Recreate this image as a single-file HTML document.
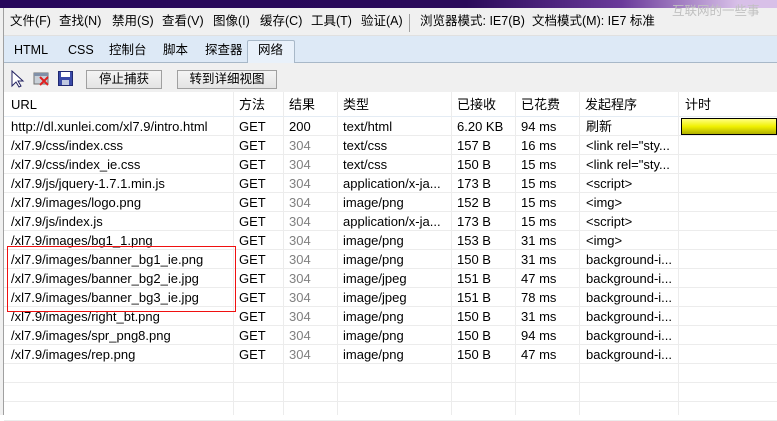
<!DOCTYPE html>
<html><head><meta charset="utf-8"><style>
*{margin:0;padding:0;box-sizing:border-box}
body{width:777px;height:415px;overflow:hidden;background:#fff;font-family:"Liberation Sans","Noto Sans CJK SC",sans-serif;font-size:12px;color:#000;position:relative}
.a{position:absolute;white-space:nowrap}
#top{left:0;top:0;width:777px;height:8px;background:linear-gradient(90deg,#26065a 0%,#2a0a5a 60%,#6a3a9a 80%,#d8c0e8 95%)}
#menu{left:0;top:8px;width:777px;height:28px;background:#f0f0f0;border-bottom:1px solid #e0e0e0}
#tabs{left:4px;top:36px;width:773px;height:27px;background:#dde9f6;border-bottom:1px solid #a8b8c8}
#tool{left:4px;top:63px;width:773px;height:29px;background:#f0f0f0}
#lb{left:0;top:8px;width:4px;height:407px;background:#f0f0f0;border-right:1px solid #a0a0a0}
.btn{position:absolute;top:70px;height:19px;border:1px solid #a0a0a0;background:linear-gradient(#f4f4f4,#e4e4e4);text-align:center;line-height:17px;font-size:12.5px}
.tab{position:absolute;top:41px;font-size:12.5px;line-height:19px;height:19px}
.m{position:absolute;top:12px;font-size:12.5px;line-height:19px;height:19px}
.row{position:absolute;left:4px;width:773px;height:19px;border-bottom:1px solid #ececec}
.c{position:absolute;font-size:13px;line-height:19px;height:19px;white-space:nowrap}
.g{color:#808080}
.vl{position:absolute;top:92px;width:1px;height:323px;background:#ececec}
</style></head><body>
<div class="a" id="top"></div>
<div class="a" id="menu"></div>
<div class="a" style="left:672px;top:3px;color:#c0c0c0;font-size:12.5px;line-height:16px">互联网的一些事</div>
<div class="m" style="left:10px">文件(F)</div>
<div class="m" style="left:59px">查找(N)</div>
<div class="m" style="left:112px">禁用(S)</div>
<div class="m" style="left:162px">查看(V)</div>
<div class="m" style="left:213px">图像(I)</div>
<div class="m" style="left:260px">缓存(C)</div>
<div class="m" style="left:311px">工具(T)</div>
<div class="m" style="left:361px">验证(A)</div>
<div class="a" style="left:409px;top:14px;width:1px;height:18px;background:#a0a0a0"></div>
<div class="m" style="left:420px">浏览器模式: IE7(B)</div>
<div class="m" style="left:532px">文档模式(M): IE7 标准</div>
<div class="a" id="tabs"></div>
<div class="a" style="left:247px;top:40px;width:48px;height:24px;background:#e9f1fa;border:1px solid #a8b8c8;border-bottom:none;border-radius:2px 2px 0 0"></div>
<div class="tab" style="left:14px">HTML</div>
<div class="tab" style="left:68px">CSS</div>
<div class="tab" style="left:109px">控制台</div>
<div class="tab" style="left:163px">脚本</div>
<div class="tab" style="left:205px">探查器</div>
<div class="tab" style="left:258px">网络</div>
<div class="a" id="tool"></div>
<svg class="a" style="left:10px;top:70px" width="16" height="18"><path d="M2 1 L2 16 L6 12 L9 17 L11 16 L8 11 L13 11 Z" fill="#fff" stroke="#202060" stroke-width="1"/></svg>
<svg class="a" style="left:33px;top:71px" width="18" height="16"><rect x="1" y="2" width="14" height="11" fill="#c8d0d8" stroke="#707070"/><rect x="1" y="2" width="14" height="3" fill="#8090a8"/><path d="M7 6 L15 14 M15 6 L7 14" stroke="#e02020" stroke-width="2"/></svg>
<svg class="a" style="left:58px;top:71px" width="15" height="15"><rect x="0.5" y="0.5" width="14" height="14" fill="#3a4aa8" stroke="#202870"/><rect x="3" y="1" width="9" height="5" fill="#fff"/><rect x="4" y="9" width="7" height="5" fill="#c0c8e0"/></svg>
<div class="btn" style="left:86px;width:76px">停止捕获</div>
<div class="btn" style="left:177px;width:100px">转到详细视图</div>
<div class="a" id="lb"></div>
<div class="row" style="top:92px;height:25px;border-bottom:1px solid #e4ecf4"></div>
<div class="c" style="left:11px;top:95px">URL</div>
<div class="c" style="left:239px;top:95px">方法</div>
<div class="c" style="left:289px;top:95px">结果</div>
<div class="c" style="left:343px;top:95px">类型</div>
<div class="c" style="left:457px;top:95px">已接收</div>
<div class="c" style="left:521px;top:95px">已花费</div>
<div class="c" style="left:585px;top:95px">发起程序</div>
<div class="c" style="left:685px;top:95px">计时</div>
<div class="vl" style="left:233px"></div><div class="vl" style="left:283px"></div><div class="vl" style="left:337px"></div><div class="vl" style="left:451px"></div><div class="vl" style="left:515px"></div><div class="vl" style="left:579px"></div><div class="vl" style="left:678px"></div>
<div id="rows"></div>
<div class="a" style="left:681px;top:118px;width:96px;height:17px;border:1px solid #000;background:linear-gradient(#ffff80,#f0f000 50%,#b0b000)"></div>
<div class="a" style="left:7px;top:246px;width:229px;height:66px;border:1px solid #f01010"></div>
<script>
var d=[["http://dl.xunlei.com/xl7.9/intro.html","200","text/html","6.20 KB","94 ms","刷新"],
["/xl7.9/css/index.css","304","text/css","157 B","16 ms","<link rel=\"sty..."],
["/xl7.9/css/index_ie.css","304","text/css","150 B","15 ms","<link rel=\"sty..."],
["/xl7.9/js/jquery-1.7.1.min.js","304","application/x-ja...","173 B","15 ms","<script>"],
["/xl7.9/images/logo.png","304","image/png","152 B","15 ms","<img>"],
["/xl7.9/js/index.js","304","application/x-ja...","173 B","15 ms","<script>"],
["/xl7.9/images/bg1_1.png","304","image/png","153 B","31 ms","<img>"],
["/xl7.9/images/banner_bg1_ie.png","304","image/png","150 B","31 ms","background-i..."],
["/xl7.9/images/banner_bg2_ie.jpg","304","image/jpeg","151 B","47 ms","background-i..."],
["/xl7.9/images/banner_bg3_ie.jpg","304","image/jpeg","151 B","78 ms","background-i..."],
["/xl7.9/images/right_bt.png","304","image/png","150 B","31 ms","background-i..."],
["/xl7.9/images/spr_png8.png","304","image/png","150 B","94 ms","background-i..."],
["/xl7.9/images/rep.png","304","image/png","150 B","47 ms","background-i..."],
["","","","","",""],["","","","","",""],["","","","","",""]];
var h="";function e(s){return s.replace(/&/g,"&amp;").replace(/</g,"&lt;").replace(/>/g,"&gt;")}
d.forEach(function(r,i){var t=117+19*i;h+='<div class="row" style="top:'+t+'px"></div>';
if(r[0]){h+='<div class="c" style="left:11px;top:'+t+'px">'+e(r[0])+'</div><div class="c" style="left:239px;top:'+t+'px">GET</div><div class="c'+(r[1]=="304"?" g":"")+'" style="left:289px;top:'+t+'px">'+r[1]+'</div><div class="c" style="left:343px;top:'+t+'px">'+e(r[2])+'</div><div class="c" style="left:457px;top:'+t+'px">'+r[3]+'</div><div class="c" style="left:521px;top:'+t+'px">'+r[4]+'</div><div class="c" style="left:586px;top:'+t+'px">'+e(r[5])+'</div>';}});
document.getElementById("rows").innerHTML=h;
</script>
</body></html>
